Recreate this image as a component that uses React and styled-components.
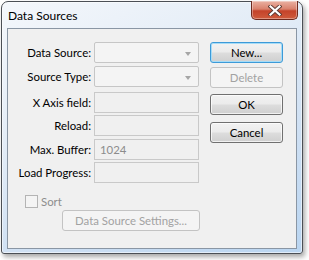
import React from 'react';
import styled, { createGlobalStyle } from 'styled-components';

const GlobalStyle = createGlobalStyle`
  html, body {
    margin: 0;
    padding: 0;
    background: #ffffff;
  }
  body {
    font-family: 'Segoe UI', Lato, 'Noto Sans', sans-serif;
  }
`;

const Page = styled.div`
  width: 309px;
  height: 260px;
  padding: 1px 0 0 1px;
  box-sizing: border-box;
`;

const Window = styled.div`
  width: 302px;
  height: 253px;
  box-sizing: border-box;
  border: 1px solid #4b4f55;
  border-radius: 7px 7px 3px 3px;
  background: linear-gradient(155deg, #f4f7fb 0%, #e4edf7 35%, #cddff3 70%, #b9d5f1 100%);
  box-shadow: inset 0 0 0 1px rgba(255, 255, 255, 0.55), 2px 3px 5px rgba(0, 0, 0, 0.35);
  display: flex;
  flex-direction: column;
  padding: 0 5px 4px 5px;
`;

const TitleBar = styled.div`
  height: 26px;
  display: flex;
  align-items: flex-start;
`;

const Title = styled.div`
  font-size: 12px;
  color: #000;
  padding: 6px 0 0 1px;
  line-height: 16px;
`;

const CloseButton = styled.div`
  margin-left: auto;
  margin-top: -1px;
  margin-right: -1px;
  width: 47px;
  height: 19px;
  box-sizing: border-box;
  border: 1px solid #6e2a1e;
  border-top: none;
  border-radius: 0 0 5px 5px;
  background: linear-gradient(to bottom, #eab1a2 0%, #d9816c 45%, #c4432a 55%, #cf5b3c 100%);
  box-shadow: inset 0 0 0 1px rgba(255, 255, 255, 0.35);
  display: flex;
  align-items: center;
  justify-content: center;
`;

const Client = styled.div`
  height: 221px;
  box-sizing: border-box;
  border: 1px solid #8a96a4;
  background: #f0f0f0;
  display: flex;
  padding-top: 13px;
`;

const FormColumn = styled.div`
  width: 191px;
  display: flex;
  flex-direction: column;
`;

const Row = styled.div`
  display: flex;
  align-items: center;
  height: 21px;
  margin-top: ${p => p.gap || 0}px;
`;

const Label = styled.div`
  width: 83px;
  margin-right: 3px;
  text-align: right;
  font-size: 11.4px;
  color: #000;
  white-space: nowrap;
`;

const Combo = styled.div`
  width: 105px;
  height: 21px;
  box-sizing: border-box;
  border: 1px solid #c6c6c6;
  border-radius: 2px;
  background: #f4f4f4;
  display: flex;
  align-items: center;
  justify-content: flex-end;
  padding-right: 7px;
`;

const Arrow = styled.div`
  width: 0;
  height: 0;
  border-left: 3.5px solid transparent;
  border-right: 3.5px solid transparent;
  border-top: 4px solid #a6a6a6;
  margin-top: 2px;
`;

const TextBox = styled.div`
  width: 105px;
  height: 21px;
  box-sizing: border-box;
  border: 1px solid #c9c9c9;
  background: #f0f0f0;
  font-size: 11.4px;
  color: #8c8c8c;
  padding: 0 5px;
  display: flex;
  align-items: center;
`;

const CheckRow = styled.div`
  display: flex;
  align-items: center;
  margin: 12px 0 0 17px;
  height: 13px;
`;

const CheckBox = styled.div`
  width: 13px;
  height: 13px;
  box-sizing: border-box;
  border: 1px solid #b4b4b4;
  background: #f4f4f4;
`;

const CheckLabel = styled.span`
  font-size: 11.4px;
  color: #8d8d8d;
  margin-left: 3px;
`;

const ButtonColumn = styled.div`
  margin-left: 11px;
  display: flex;
  flex-direction: column;
`;

const Button = styled.div`
  width: ${p => p.width || 73}px;
  height: 21px;
  box-sizing: border-box;
  margin-top: ${p => p.gap || 0}px;
  margin-left: ${p => p.indent || 0}px;
  border-radius: 3px;
  font-size: 11.4px;
  display: flex;
  align-items: center;
  justify-content: center;
  border: 1px solid ${p => (p.disabled ? '#c3c3c3' : p.focused ? '#3c9ad8' : '#707070')};
  color: ${p => (p.disabled ? '#a2a2a2' : '#000')};
  background: ${p =>
    p.disabled
      ? '#f4f4f4'
      : 'linear-gradient(to bottom, #f2f2f2 0%, #ebebeb 48%, #dddddd 52%, #cfcfcf 100%)'};
  box-shadow: ${p =>
    p.focused
      ? 'inset 0 0 0 1px #a6dcf7'
      : p.disabled
      ? 'none'
      : 'inset 0 0 0 1px rgba(255, 255, 255, 0.7)'};
`;

const CloseIcon = () => (
  <svg width="14" height="11" viewBox="0 0 14 11">
    <path d="M2.5 1.5 L11.5 9.5 M11.5 1.5 L2.5 9.5" stroke="#5b3a33" strokeWidth="4" strokeLinecap="square" />
    <path d="M2.5 1.5 L11.5 9.5 M11.5 1.5 L2.5 9.5" stroke="#ffffff" strokeWidth="2.2" strokeLinecap="square" />
  </svg>
);

const fields = [
  { label: 'Data Source:', type: 'combo', gap: 0 },
  { label: 'Source Type:', type: 'combo', gap: 3 },
  { label: 'X Axis field:', type: 'text', gap: 5 },
  { label: 'Reload:', type: 'text', gap: 2 },
  { label: 'Max. Buffer:', type: 'text', gap: 3, value: '1024' },
  { label: 'Load Progress:', type: 'text', gap: 2 },
];

const App = () => {
  return (
    <Page>
      <GlobalStyle />
      <Window>
        <TitleBar>
          <Title>Data Sources</Title>
          <CloseButton>
            <CloseIcon />
          </CloseButton>
        </TitleBar>
        <Client>
          <FormColumn>
            {fields.map(f => (
              <Row key={f.label} gap={f.gap}>
                <Label>{f.label}</Label>
                {f.type === 'combo' ? (
                  <Combo>
                    <Arrow />
                  </Combo>
                ) : (
                  <TextBox>{f.value}</TextBox>
                )}
              </Row>
            ))}
            <CheckRow>
              <CheckBox />
              <CheckLabel>Sort</CheckLabel>
            </CheckRow>
            <Button disabled width={138} gap={2} indent={54}>
              Data Source Settings...
            </Button>
          </FormColumn>
          <ButtonColumn>
            <Button focused>New...</Button>
            <Button disabled gap={4}>Delete</Button>
            <Button gap={6}>OK</Button>
            <Button gap={7}>Cancel</Button>
          </ButtonColumn>
        </Client>
      </Window>
    </Page>
  );
};

export default App;
